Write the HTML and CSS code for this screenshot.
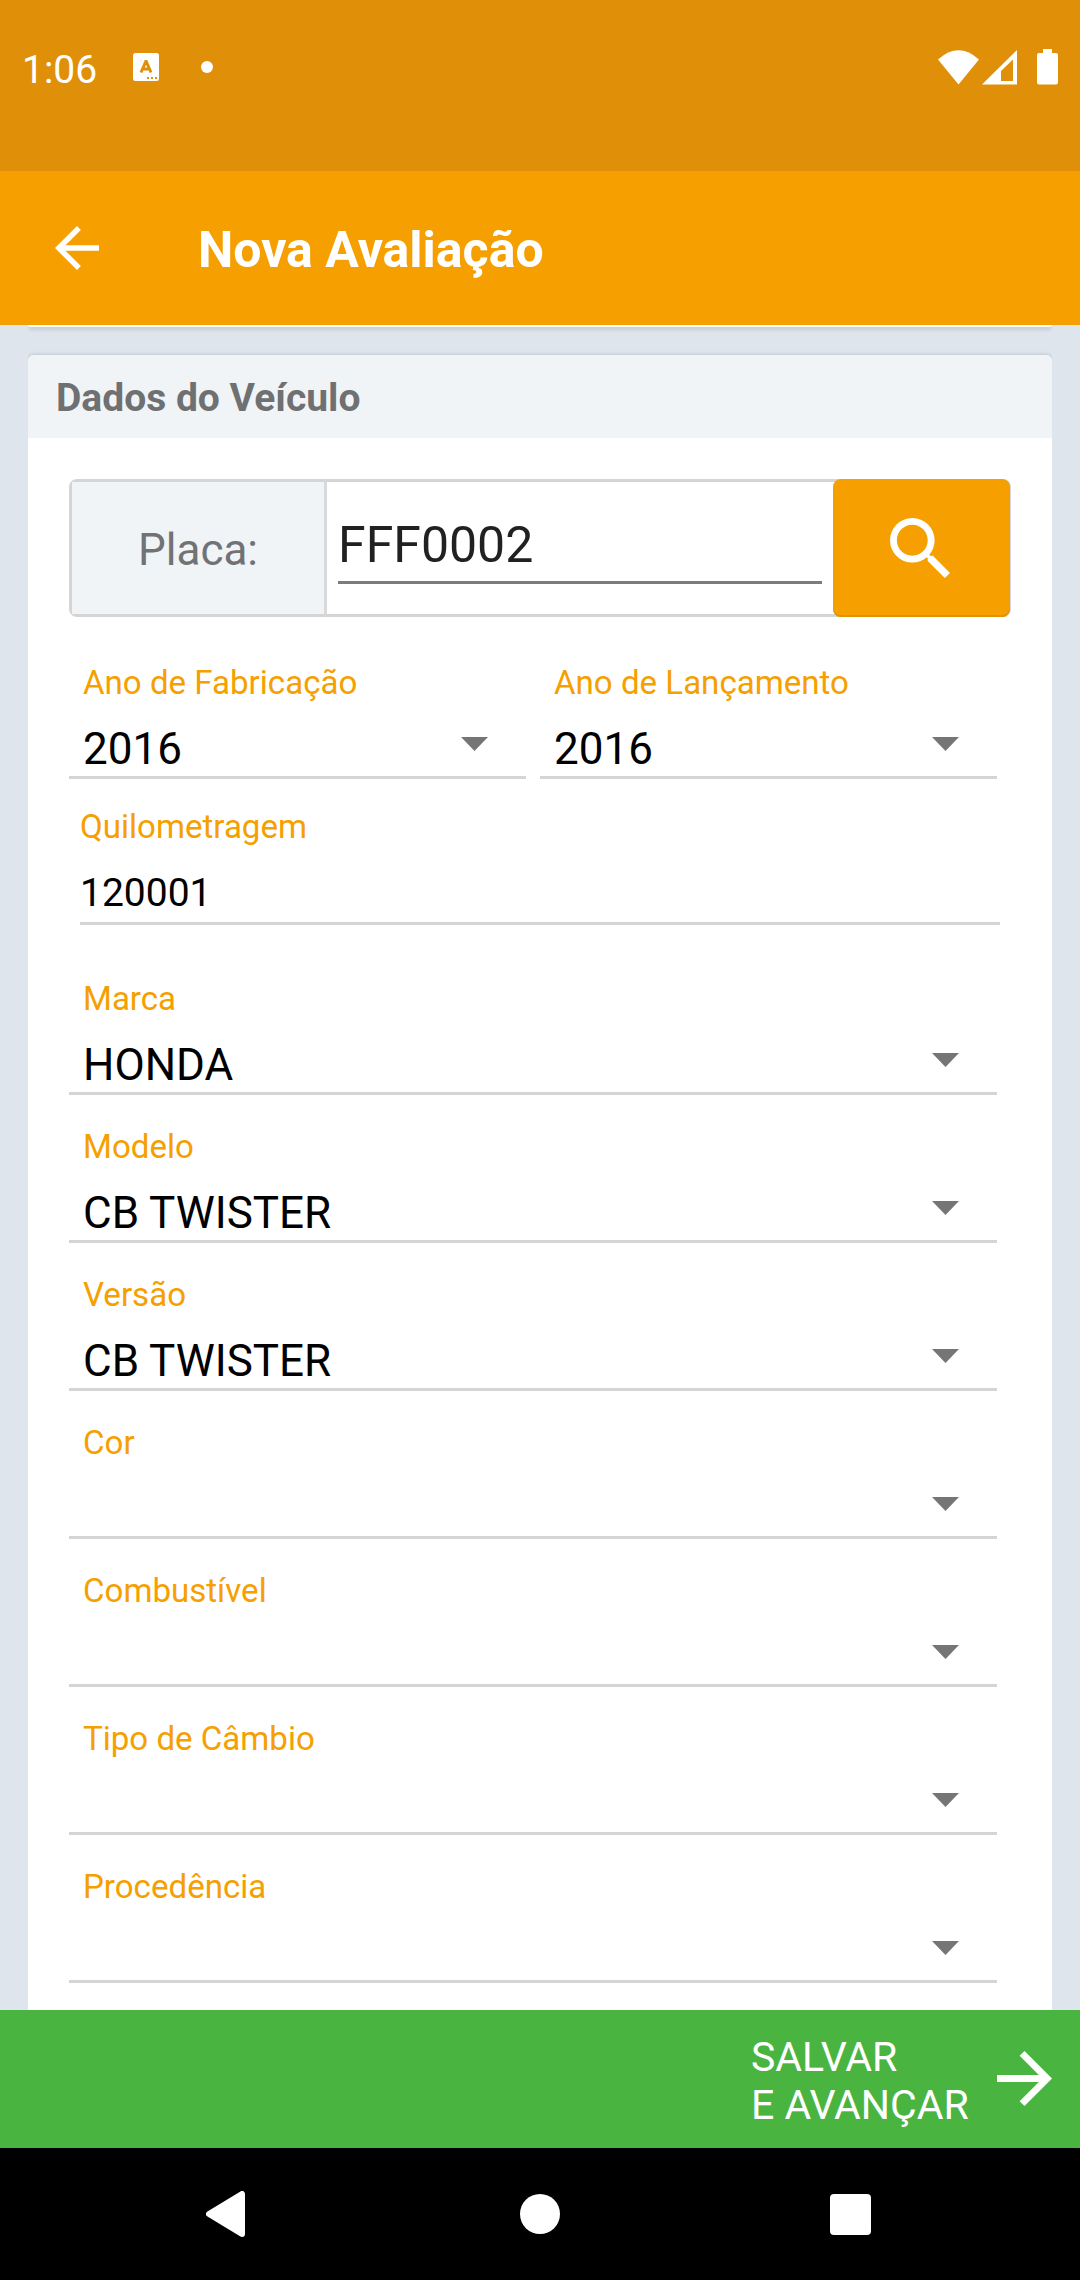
FILE: index.html
```html
<!DOCTYPE html>
<html lang="pt-BR">
<head>
<meta charset="utf-8">
<title>Nova Avaliação</title>
<link rel="stylesheet" href="styles.css">
</head>
<body>
<div class="screen">
  <div class="status">
    <span class="clock">1:06</span>
    <svg class="notif" width="26" height="28" viewBox="0 0 26 28"><rect width="26" height="28" rx="2.5" fill="#fff"/><path d="M8 19.5 12.8 8.5h.4L18 19.5M9.8 16h6.4" fill="none" stroke="#df9008" stroke-width="3"/><path d="M14 25h2m2 0h2m2 0h2" stroke="#df9008" stroke-width="2"/></svg>
    <span class="dot"></span>
    <svg class="signals" width="122" height="36" viewBox="936 49 122 36" fill="#fff"><path d="M938 59.500Q958.500 41 979 59.500L958.500 84.500Z"/><path fill-rule="evenodd" d="M982 84.500 1017 50V84.500ZM1001 71V81h12V59.500Z"/><path d="M1043 49h9v4h4a2 2 0 0 1 2 2v27.500a2 2 0 0 1-2 2h-17a2 2 0 0 1-2-2V55a2 2 0 0 1 2-2h4Z"/></svg>
  </div>
  <header class="appbar">
    <svg class="back" width="44" height="44" viewBox="4 4 16 16" fill="#fff"><path d="M20 11H7.830l5.590-5.590L12 4l-8 8 8 8 1.410-1.410L7.830 13H20v-2z"/></svg>
    <h1>Nova Avaliação</h1>
  </header>
  <main class="content">
    <div class="card previous"></div>
    <section class="card vehicle">
      <h2>Dados do Veículo</h2>
      <div class="form">
        <div class="plate">
          <span class="plate-label">Placa:</span>
          <div class="plate-entry"><span class="plate-value">FFF0002</span></div>
          <div class="search"><svg width="60" height="60" viewBox="3 3 17.490 17.490" fill="#fff"><path d="M15.500 14h-.790l-.280-.270A6.471 6.471 0 0 0 16 9.500 6.500 6.500 0 1 0 9.500 16c1.610 0 3.090-.590 4.230-1.570l.270.280v.790l5 4.990L20.490 19l-4.990-5zm-6 0C7.010 14 5 11.990 5 9.500S7.010 5 9.500 5 14 7.010 14 9.500 11.990 14 9.500 14z"/></svg></div>
        </div>
        <div class="years">
          <div class="field"><label>Ano de Fabricação</label><div class="value">2016<i class="caret"></i></div></div>
          <div class="field"><label>Ano de Lançamento</label><div class="value">2016<i class="caret"></i></div></div>
        </div>
        <div class="km"><label>Quilometragem</label><div class="km-value">120001</div></div>
        <div class="field"><label>Marca</label><div class="value">HONDA<i class="caret"></i></div></div>
        <div class="field"><label>Modelo</label><div class="value">CB TWISTER<i class="caret"></i></div></div>
        <div class="field"><label>Versão</label><div class="value">CB TWISTER<i class="caret"></i></div></div>
        <div class="field"><label>Cor</label><div class="value"><i class="caret"></i></div></div>
        <div class="field"><label>Combustível</label><div class="value"><i class="caret"></i></div></div>
        <div class="field"><label>Tipo de Câmbio</label><div class="value"><i class="caret"></i></div></div>
        <div class="field"><label>Procedência</label><div class="value"><i class="caret"></i></div></div>
      </div>
    </section>
  </main>
  <footer class="save">
    <span>SALVAR<br>E AVANÇAR</span>
    <svg width="55" height="55" viewBox="4 4 16 16" fill="#fff"><path d="M12 4l-1.410 1.410L16.170 11H4v2h12.170l-5.580 5.590L12 20l8-8z"/></svg>
  </footer>
  <nav class="sysnav">
    <svg width="40" height="46" viewBox="0 0 40 46"><path d="M3 23 36 3V43Z" fill="#fff" stroke="#fff" stroke-width="6" stroke-linejoin="round"/></svg>
    <svg class="home" width="40" height="40" viewBox="0 0 40 40"><circle cx="20" cy="20" r="20" fill="#fff"/></svg>
    <svg width="41" height="41" viewBox="0 0 41 41"><rect width="41" height="41" rx="4" fill="#fff"/></svg>
  </nav>
</div>
</body>
</html>
```
FILE: styles.css
```css
* { box-sizing: border-box; }
body { margin: 0; font-family: Roboto, "Liberation Sans", sans-serif; }
h1, h2 { margin: 0; }
svg { display: block; flex: none; }
.screen { width: 1080px; height: 2280px; display: flex; flex-direction: column; overflow: hidden; }

.status { height: 171px; flex: none; background: #df9008; color: #fff; display: flex; align-items: flex-start; padding: 0 22px; }
.clock { width: 111px; font-size: 39px; line-height: 40px; margin-top: 50px; }
.notif { margin-top: 53px; }
.dot { width: 12px; height: 12px; border-radius: 50%; background: #fff; margin: 61px 0 0 42px; }
.signals { margin: 49px 0 0 auto; }

.appbar { height: 154px; flex: none; background: #f5a000; color: #fff; display: flex; align-items: center; padding: 0 55px; }
.appbar h1 { font-size: 50px; line-height: 60px; font-weight: 700; margin: 3px 0 0 99px; }

.content { height: 1685px; flex: none; background: #dee5ec; padding: 0 28px; overflow: hidden; }
.card { background: #fff; box-shadow: 0 1px 5px rgba(0, 0, 0, .3); }
.previous { height: 2px; border-radius: 0 0 4px 4px; clip-path: inset(0 0 -10px 0); }
.vehicle { height: 1690px; margin-top: 28px; border-radius: 6px; clip-path: inset(-10px 0 0 0); }
.vehicle h2 { height: 83px; padding: 2px 0 0 28px; background: #f0f4f7; border-radius: 6px 6px 0 0; color: #6e7072; font-size: 39px; line-height: 82px; font-weight: 700; }
.form { padding: 41px 55px 0 41px; }

.plate { width: 942px; height: 138px; border: 3px solid #d5d5d5; border-radius: 8px; display: flex; }
.plate-label { width: 255px; border-right: 3px solid #d9d9d9; background: #f0f4f7; color: #707274; font-size: 44px; line-height: 136px; text-align: center; }
.plate-entry { flex: 1; padding: 31px 11px 30px; display: flex; }
.plate-value { flex: 1; border-bottom: 3px solid #7c7c7c; color: #212121; font-size: 50px; line-height: 64px; }
.search { width: 177px; margin: -3px -2px -3px 0; border-radius: 8px; background: #f5a000; box-shadow: inset 0 -2px #e29300; display: flex; align-items: center; padding-left: 57px; }

label { display: block; color: #f5a000; font-size: 33.1px; line-height: 40px; }
.years { margin-top: 14px; display: grid; grid-template-columns: 1fr 1fr; gap: 14px; }
.field { height: 148px; padding: 32px 14px 0; border-bottom: 3px solid #d5d5d5; }
.value { height: 54px; margin-top: 19px; display: flex; justify-content: space-between; font-size: 44px; line-height: 54px; color: #000; }
.caret { width: 27px; height: 14px; margin: 15px 24px 0 auto; background: #757575; clip-path: polygon(0 0, 100% 0, 50% 100%); }
.km { margin: 0 -3px 22px 11px; padding-top: 28px; border-bottom: 3px solid #d5d5d5; }
.km-value { margin-top: 17px; font-size: 39px; line-height: 58px; color: #000; }

.save { height: 138px; flex: none; background: #4ab440; color: #fff; display: flex; justify-content: flex-end; align-items: center; padding: 0 28px 1px 0; }
.save span { width: 246px; padding-top: 4px; font-size: 41px; line-height: 48px; }
.sysnav { height: 132px; flex: none; background: #000; display: flex; align-items: center; justify-content: space-between; padding: 0 209px 0 206px; }
.home { margin-left: 4px; }
```
